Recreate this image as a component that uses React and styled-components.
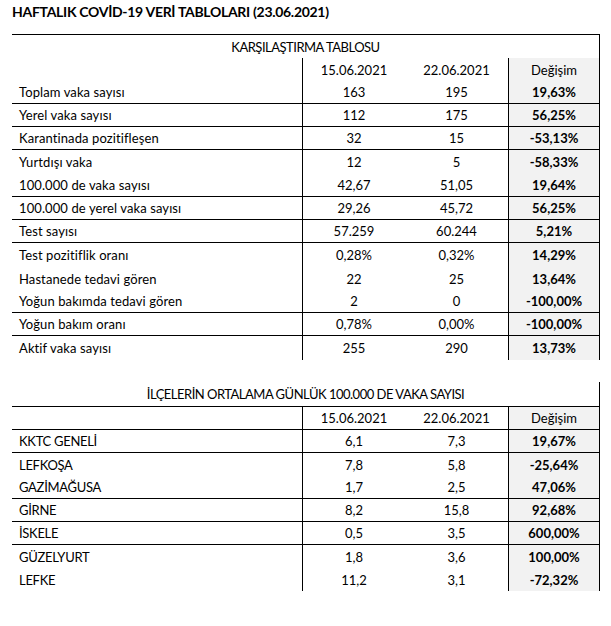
import styled, { createGlobalStyle } from 'styled-components';

const GlobalStyle = createGlobalStyle`
  body {
    margin: 0;
    background: #ffffff;
    font-family: Lato, "Liberation Sans", sans-serif;
    color: #000000;
  }
`;

const Page = styled.div`
  width: 611px;
  height: 626px;
  padding: 3px 0 0 12px;
  box-sizing: border-box;
`;

const Heading = styled.h1`
  margin: 0;
  height: 31px;
  font-size: 14px;
  font-weight: 700;
  line-height: 17px;
  letter-spacing: -0.3px;
`;

const Table = styled.div`
  width: 588px;
  margin-bottom: ${props => props.$gap || 0}px;
`;

const TitleRow = styled.div`
  height: ${props => props.$h}px;
  display: flex;
  align-items: center;
  justify-content: center;
  box-sizing: border-box;
  border-top: ${props => (props.$top ? '1px solid #000' : 'none')};
  border-bottom: ${props => (props.$bottom ? '1px solid #000' : 'none')};
  border-right: 1px solid #000;
  font-size: 13px;
  letter-spacing: -0.5px;
`;

const Row = styled.div`
  display: grid;
  grid-template-columns: 290px 103px 103px 92px;
  height: ${props => props.$h || 23}px;
  box-sizing: border-box;
  border-bottom: ${props => (props.$line ? '1px solid #000' : 'none')};
  font-size: 13px;
`;

const Label = styled.div`
  display: flex;
  align-items: center;
  padding-left: 7px;
  letter-spacing: ${props => (props.$caps ? '-0.3px' : '0.1px')};
`;

const Value = styled.div`
  display: flex;
  align-items: center;
  justify-content: center;
  border-left: ${props => (props.$edge ? '1px solid #000' : 'none')};
`;

const Change = styled.div`
  display: flex;
  align-items: center;
  justify-content: center;
  background: #f2f2f2;
  border-left: 1px solid #000;
  border-right: 1px solid #000;
  font-weight: ${props => (props.$plain ? 400 : 700)};
`;

const comparison = [
  ['Toplam vaka sayısı', '163', '195', '19,63%', 23, true],
  ['Yerel vaka sayısı', '112', '175', '56,25%', 23, true],
  ['Karantinada pozitifleşen', '32', '15', '-53,13%', 23, true],
  ['Yurtdışı vaka', '12', '5', '-58,33%', 24, false],
  ['100.000 de vaka sayısı', '42,67', '51,05', '19,64%', 23, true],
  ['100.000 de yerel vaka sayısı', '29,26', '45,72', '56,25%', 23, true],
  ['Test sayısı', '57.259', '60.244', '5,21%', 23, true],
  ['Test pozitiflik oranı', '0,28%', '0,32%', '14,29%', 24, false],
  ['Hastanede tedavi gören', '22', '25', '13,64%', 23, false],
  ['Yoğun bakımda tedavi gören', '2', '0', '-100,00%', 23, true],
  ['Yoğun bakım oranı', '0,78%', '0,00%', '-100,00%', 23, true],
  ['Aktif vaka sayısı', '255', '290', '13,73%', 24, false],
];

const districts = [
  ['KKTC GENELİ', '6,1', '7,3', '19,67%', true],
  ['LEFKOŞA', '7,8', '5,8', '-25,64%', false],
  ['GAZİMAĞUSA', '1,7', '2,5', '47,06%', true],
  ['GİRNE', '8,2', '15,8', '92,68%', true],
  ['İSKELE', '0,5', '3,5', '600,00%', true],
  ['GÜZELYURT', '1,8', '3,6', '100,00%', false],
  ['LEFKE', '11,2', '3,1', '-72,32%', false],
];

const DateRow = ({ line }) => (
  <Row $line={line}>
    <Label />
    <Value $edge>15.06.2021</Value>
    <Value>22.06.2021</Value>
    <Change $plain>Değişim</Change>
  </Row>
);

const App = () => {
  return (
    <Page>
      <GlobalStyle />
      <Heading>HAFTALIK COVİD-19 VERİ TABLOLARI (23.06.2021)</Heading>

      <Table $gap={22}>
        <TitleRow $h={24} $top>KARŞILAŞTIRMA TABLOSU</TitleRow>
        <DateRow />
        {comparison.map(([label, a, b, change, h, line]) => (
          <Row key={label} $h={h} $line={line}>
            <Label>{label}</Label>
            <Value $edge>{a}</Value>
            <Value>{b}</Value>
            <Change>{change}</Change>
          </Row>
        ))}
      </Table>

      <Table>
        <TitleRow $h={25} $bottom>
          İLÇELERİN ORTALAMA GÜNLÜK 100.000 DE VAKA SAYISI
        </TitleRow>
        <DateRow line />
        {districts.map(([label, a, b, change, line]) => (
          <Row key={label} $line={line}>
            <Label $caps>{label}</Label>
            <Value $edge>{a}</Value>
            <Value>{b}</Value>
            <Change>{change}</Change>
          </Row>
        ))}
      </Table>
    </Page>
  );
};

export default App;
